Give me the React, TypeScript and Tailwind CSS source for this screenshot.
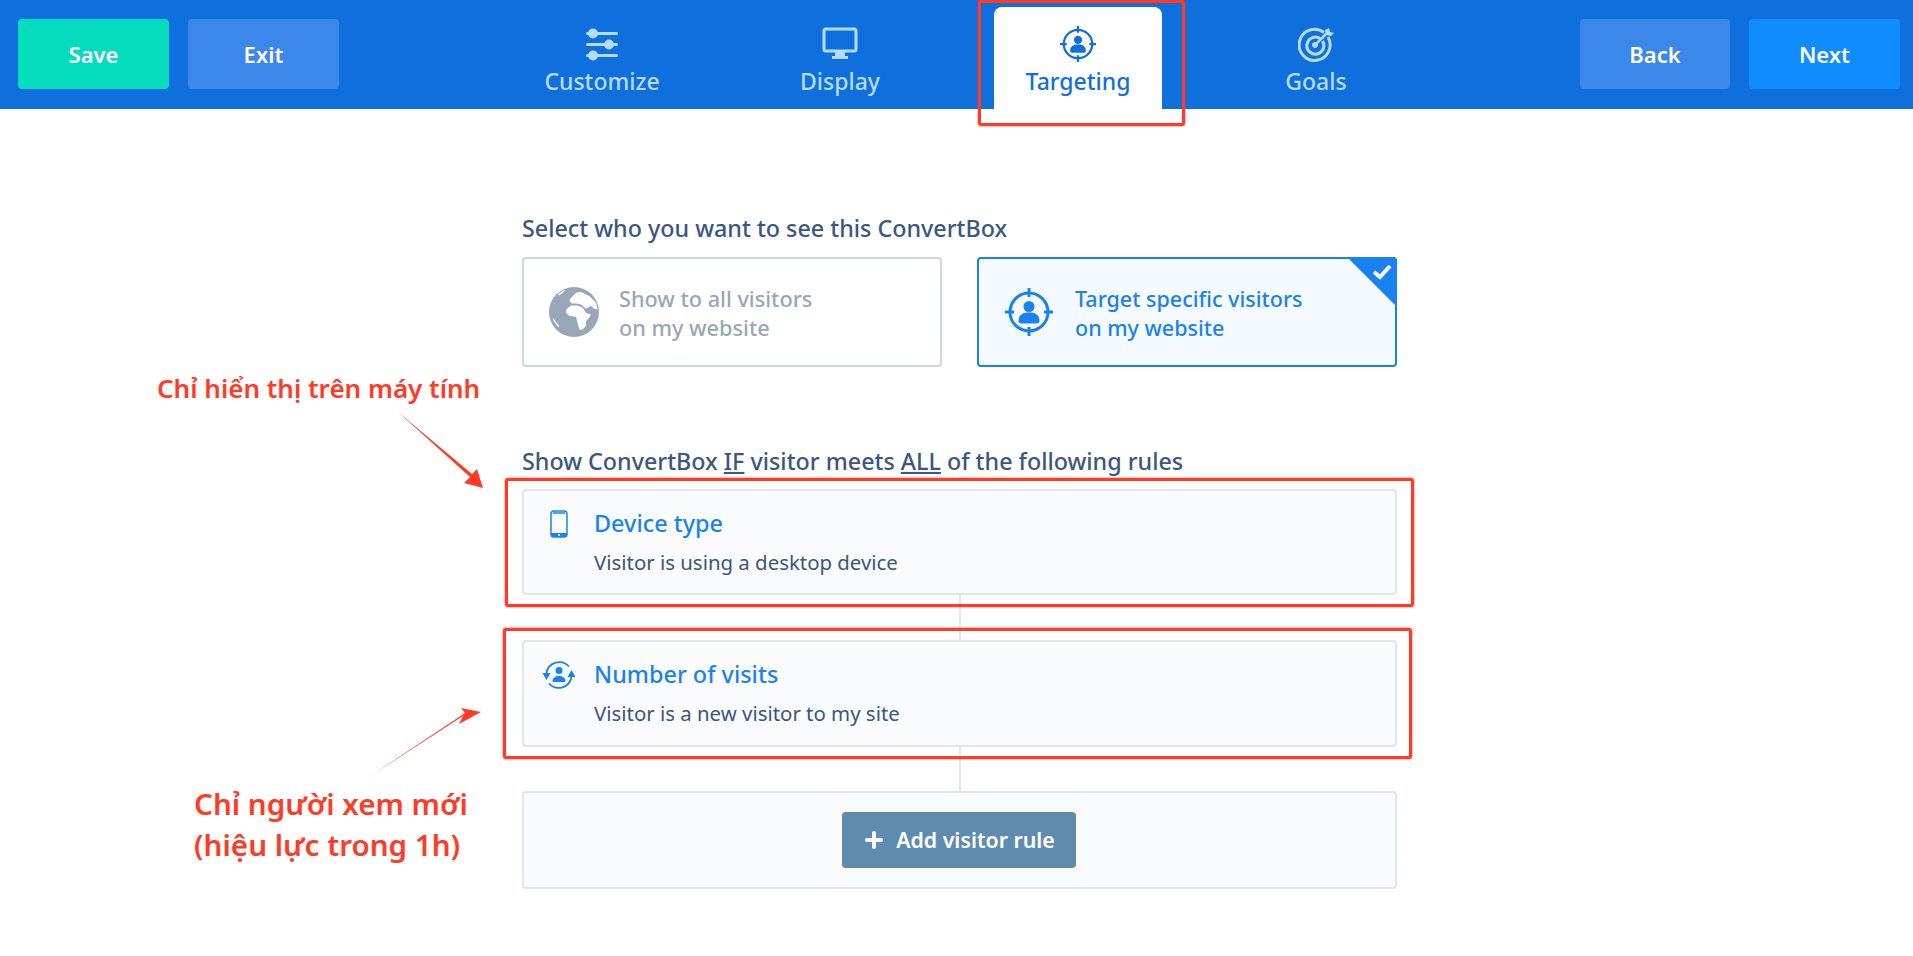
import type React from "react"
import { Plus } from "lucide-react"

const font = "font-['Noto_Sans','Open_Sans',sans-serif]"

function SlidersIcon() {
  return (
    <svg width="34" height="34" viewBox="0 0 34 34" fill="#b5dcfb">
      <rect x="1" y="5" width="32" height="3" rx="1.5" />
      <circle cx="8" cy="6.5" r="5" />
      <rect x="1" y="16" width="32" height="3" rx="1.5" />
      <circle cx="24" cy="17.5" r="5" />
      <rect x="1" y="27" width="32" height="3" rx="1.5" />
      <circle cx="8" cy="28.5" r="5" />
    </svg>
  )
}

function MonitorIcon() {
  return (
    <svg width="36" height="34" viewBox="0 0 36 34" fill="none">
      <rect x="2" y="2" width="32" height="22" rx="2" stroke="#b5dcfb" strokeWidth="3" />
      <rect x="13" y="25" width="10" height="5" fill="#b5dcfb" />
      <rect x="10" y="29" width="16" height="3" fill="#b5dcfb" />
    </svg>
  )
}

function TargetUserIcon({ size, color }: { size: number; color: string }) {
  return (
    <svg width={size} height={size} viewBox="0 0 48 48" fill="none">
      <circle cx="24" cy="24" r="19" stroke={color} strokeWidth="3" />
      <path d="M24 0v9M24 39v9M0 24h9M39 24h9" stroke={color} strokeWidth="3" />
      <circle cx="24" cy="18.5" r="5.5" fill={color} />
      <path d="M13.5 33c0-6 4-8.5 10.5-8.5S34.5 27 34.5 33c0 1.5-1 2.5-3 2.5h-15c-2 0-3-1-3-2.5z" fill={color} />
    </svg>
  )
}

function GoalIcon() {
  return (
    <svg width="36" height="36" viewBox="0 0 36 36" fill="none" stroke="#b5dcfb">
      <path d="M26 6.5A15.5 15.5 0 1 0 30 11" strokeWidth="3" />
      <path d="M22 12.5A8.5 8.5 0 1 0 24.5 15" strokeWidth="3" />
      <circle cx="17" cy="19" r="2.5" fill="#b5dcfb" />
      <path d="M17 19L29 7" strokeWidth="2.5" />
      <path d="M27 4l1 5 5 1 3-3-4-1-1-4z" fill="#b5dcfb" strokeWidth="0" />
    </svg>
  )
}

function GlobeIcon() {
  return (
    <svg width="50" height="50" viewBox="0 0 50 50">
      <circle cx="25" cy="25" r="25" fill="#98a6b8" />
      {/* africa */}
      <path d="M17 22.4L22 18.4 28.7 18.4 33.7 20.7 37 25.7 42 27.4 40.3 30.7 37 34 37 39 33.7 42.4 30.3 42.4 28 34 27 29.7 20.3 29 17 25.7z" fill="#fff" />
      {/* europe and asia */}
      <path d="M22 10.7L27 5.7 32 5 40.3 9 47 15.7 48.7 22.4 45.3 21.7 42 19 37 21.7 32 17.4 27 16.4 22.7 16.4 20.3 14z" fill="#fff" />
      <path d="M8.7 7.4L15.3 3 16 4 10 8.5zM3.7 30.7L10.3 39 9 40 4 33z" fill="#fff" />
    </svg>
  )
}

function PhoneIcon() {
  return (
    <svg width="18" height="28" viewBox="0 0 18 28" fill="none">
      <rect x="1" y="1" width="16" height="26" rx="3" stroke="#1a82f0" strokeWidth="1.5" />
      <path d="M1 23h16v1a3 3 0 0 1-3 3H4a3 3 0 0 1-3-3z" fill="#1a82f0" />
      <circle cx="9" cy="25" r="1" fill="#fff" />
      <path d="M3 3h12" stroke="#1a82f0" strokeWidth="1.5" />
    </svg>
  )
}

function VisitsIcon() {
  return (
    <svg width="34" height="28" viewBox="0 0 34 28" fill="none">
      <path d="M4.5 12A13 13 0 0 1 27 5.5" stroke="#1a82f0" strokeWidth="1.8" />
      <path d="M29.5 16A13 13 0 0 1 7 22.5" stroke="#1a82f0" strokeWidth="1.8" />
      <path d="M0.5 12h8l-4 7zM25.5 16h8l-4-7z" fill="#1a82f0" />
      <circle cx="17" cy="9.5" r="3.5" fill="#1a82f0" />
      <path d="M10.5 20c0-3 3-5 6.5-5s6.5 2 6.500 5c0 .8-.7 1-1.500 1H12c-.8 0-1.500-.2-1.500-1z" fill="#1a82f0" />
    </svg>
  )
}

function NavTab({ label, icon, active }: { label: string; icon: React.ReactNode; active?: boolean }) {
  return (
    <div
      className={
        active
          ? "w-[168px] h-[102px] bg-white rounded-t-lg flex flex-col items-center pt-[19px] text-[#0f6fdc]"
          : "w-[168px] h-[102px] flex flex-col items-center pt-[19px] text-[#b5dcfb]"
      }
    >
      <div className="h-[36px] flex items-center">{icon}</div>
      <div className="text-[23px] leading-[30px] font-medium mt-[4px] ml-[1px]">{label}</div>
    </div>
  )
}

function RuleCard({ icon, title, text, height }: { icon: React.ReactNode; title: string; text: string; height: string }) {
  return (
    <div className={`${height} bg-[#fafbfd] border-2 border-[#e1e5ec] rounded-[4px] flex pl-[17px] pt-[16px]`}>
      <div className="w-[36px] h-[32px] flex items-center justify-center shrink-0 mt-[1px]">{icon}</div>
      <div className="ml-[17px]">
        <div className="text-[23.400px] leading-[32px] font-medium text-[#1a82f0]">{title}</div>
        <div className="text-[20.400px] leading-[26px] text-[#3b5680] mt-[10px]">{text}</div>
      </div>
    </div>
  )
}

export default function App() {
  return (
    <div className={`${font} relative h-[956px] w-[1913px] overflow-hidden bg-white`}>
      {/* top bar */}
      <div className="h-[109px] bg-[#0f6fdc] flex items-end justify-between pl-[18px] pr-[13px]">
        <div className="flex gap-[19px] self-start mt-[19px] text-[22px] font-semibold text-white">
          <button className="w-[151px] h-[70px] rounded-[4px] bg-[#05dcbd]">Save</button>
          <button className="w-[151px] h-[70px] rounded-[4px] bg-[#3b87ea]">Exit</button>
        </div>
        <div className="flex gap-[70px] mr-[2px]">
          <NavTab label="Customize" icon={<SlidersIcon />} />
          <NavTab label="Display" icon={<MonitorIcon />} />
          <NavTab label="Targeting" icon={<TargetUserIcon size={36} color="#0f6fdc" />} active />
          <NavTab label="Goals" icon={<GoalIcon />} />
        </div>
        <div className="flex gap-[19px] self-start mt-[19px] text-[22px] font-semibold text-white">
          <button className="w-[150px] h-[70px] rounded-[4px] bg-[#3b87ea]">Back</button>
          <button className="w-[151px] h-[70px] rounded-[4px] bg-[#118cff]">Next</button>
        </div>
      </div>

      {/* body */}
      <div className="ml-[522px] w-[875px] pt-[103px]">
        <div className="text-[23.300px] leading-[32px] font-medium text-[#3b5680]">Select who you want to see this ConvertBox</div>
        <div className="flex gap-[35px] mt-[13px]">
          <div className="w-[420px] h-[110px] border-2 border-[#cbd8e6] rounded-[4px] flex items-center pl-[25px] gap-[20px]">
            <GlobeIcon />
            <div className="text-[21.700px] leading-[29px] font-medium text-[#98a6b8] mt-[2px]">
              Show to all visitors
              <br />
              on my website
            </div>
          </div>
          <div className="relative w-[420px] h-[110px] border-2 border-[#1a82f0] rounded-[4px] bg-[#f5faff] flex items-center pl-[26px] gap-[22px]">
            <TargetUserIcon size={48} color="#1a82f0" />
            <div className="text-[21.500px] leading-[29px] font-medium text-[#1a82f0] mt-[2px]">
              Target specific visitors
              <br />
              on my website
            </div>
            <svg className="absolute right-[-2px] top-[-2px]" width="50" height="50" viewBox="0 0 50 50">
              <path d="M0 0h46a4 4 0 0 1 4 4v46z" fill="#1a82f0" />
              <path d="M27 15l6 5 10-11" fill="none" stroke="#fff" strokeWidth="4" />
            </svg>
          </div>
        </div>

        <div className="text-[23.300px] leading-[32px] font-medium text-[#3b5680] mt-[78px]">
          Show ConvertBox <span className="underline">IF</span> visitor meets <span className="underline">ALL</span> of the following rules
        </div>
        <div className="mt-[12px]">
          <RuleCard height="h-[106px]" icon={<PhoneIcon />} title="Device type" text="Visitor is using a desktop device" />
          <div className="w-[2px] h-[45px] bg-[#e1e5ec] ml-[437px]" />
          <RuleCard height="h-[107px]" icon={<VisitsIcon />} title="Number of visits" text="Visitor is a new visitor to my site" />
          <div className="w-[2px] h-[44px] bg-[#e1e5ec] ml-[437px]" />
          <div className="h-[98px] bg-[#fafbfd] border-2 border-[#e1e5ec] rounded-[4px] flex items-center justify-center">
            <button className="w-[234px] h-[56px] mr-[2px] rounded-[4px] bg-[#5f8cae] text-white text-[21.300px] font-semibold flex items-center justify-center gap-[10px]">
              <Plus size={24} strokeWidth={4} />
              Add visitor rule
            </button>
          </div>
        </div>
      </div>

      {/* screenshot annotations */}
      <div className="absolute left-[978px] top-0 w-[207px] h-[126px] border-[3px] border-[#ff3b28] rounded-[3px] shadow-[0_0_2px_#ff3b28]" />
      <div className="absolute left-[505px] top-[478px] w-[909px] h-[129px] border-[3px] border-[#ff3b28] rounded-[3px] shadow-[0_0_2px_#ff3b28]" />
      <div className="absolute left-[503px] top-[628px] w-[909px] h-[131px] border-[3px] border-[#ff3b28] rounded-[3px] shadow-[0_0_2px_#ff3b28]" />
      <div className="absolute left-[157px] top-[370px] text-[26px] leading-[36px] font-semibold text-[#ff3b28] whitespace-nowrap">
        Chỉ hiển thị trên máy tính
      </div>
      <div className="absolute left-[194px] top-[783px] text-[29.600px] leading-[41px] font-semibold text-[#ff3b28] whitespace-nowrap">
        Chỉ người xem mới
        <br />
        (hiệu lực trong 1h)
      </div>
      <svg className="absolute left-0 top-0 pointer-events-none" width="1913" height="956" fill="#ff3b28">
        <path d="M398 412L470 477 464 483 483 488 477 469 472 474z" />
        <path d="M369 777L463 716 459 724 481 712 461 708 465 713z" />
      </svg>
    </div>
  )
}
